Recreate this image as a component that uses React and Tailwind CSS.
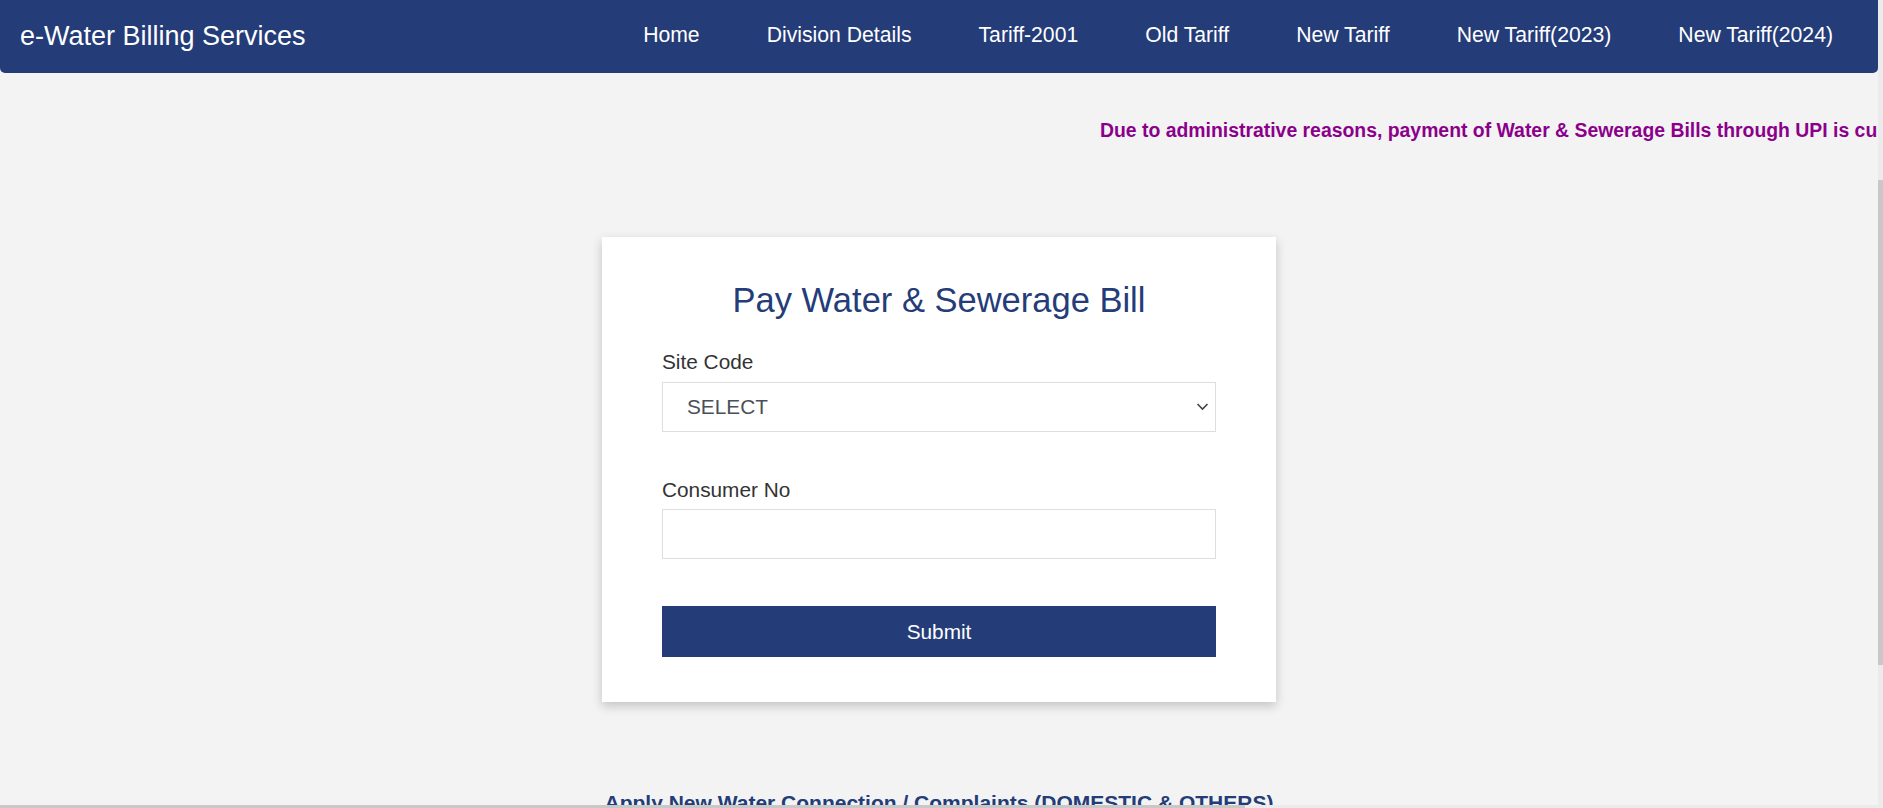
import { useState } from 'react';

const navLinks = [
  'Home',
  'Division Details',
  'Tariff-2001',
  'Old Tariff',
  'New Tariff',
  'New Tariff(2023)',
  'New Tariff(2024)',
];

const Navbar = () => (
  <nav className="h-[73px] shrink-0 bg-[#243c78] rounded-b-[5px] flex items-center justify-between pl-[20px] pr-[45px]">
    <a href="#" className="text-[27px] text-white leading-none">
      e-Water Billing Services
    </a>
    <ul className="flex items-center gap-[67px]">
      {navLinks.map((link) => (
        <li key={link}>
          <a href="#" className="text-[21.2px] text-white leading-none">
            {link}
          </a>
        </li>
      ))}
    </ul>
  </nav>
);

const BillForm = () => {
  const [siteCode, setSiteCode] = useState('');
  const [consumerNo, setConsumerNo] = useState('');

  return (
    <div className="w-[674px] mx-auto bg-white shadow-[0_4px_10px_rgba(0,0,0,0.2)] px-[60px] pt-[43px] pb-[45px]">
      <h2 className="text-[34.5px] leading-[40px] text-[#243c78] text-center">
        Pay Water &amp; Sewerage Bill
      </h2>

      <form onSubmit={(e) => e.preventDefault()}>
        {/* Site code */}
        <label className="block mt-[29px] text-[20.8px] leading-[25px] text-[#333]">
          Site Code
        </label>
        <div className="relative mt-[8px]">
          <select
            value={siteCode}
            onChange={(e) => setSiteCode(e.target.value)}
            className="w-full h-[50px] appearance-none bg-white border border-[#dedede] pl-[24px] pr-8 text-[20.8px] text-[#495057] outline-none"
          >
            <option value="">SELECT</option>
            <option value="01">01</option>
            <option value="02">02</option>
          </select>
          <svg
            className="absolute right-[7px] top-[20px] pointer-events-none"
            width="13"
            height="9"
            viewBox="0 0 13 9"
            fill="none"
          >
            <path d="M1.5 2L6.5 7L11.5 2" stroke="#444" strokeWidth="1.6" />
          </svg>
        </div>

        {/* Consumer number */}
        <label className="block mt-[45px] text-[20.8px] leading-[25px] text-[#333]">
          Consumer No
        </label>
        <input
          type="text"
          value={consumerNo}
          onChange={(e) => setConsumerNo(e.target.value)}
          className="block w-full h-[50px] mt-[7px] border border-[#dedede] px-[24px] text-[20.8px] text-[#495057] outline-none"
        />

        <button
          type="submit"
          className="block w-full h-[51px] mt-[47px] bg-[#243c78] text-white text-[20.8px]"
        >
          Submit
        </button>
      </form>
    </div>
  );
};

export default function App() {
  return (
    <div
      className="h-[808px] w-full flex flex-col overflow-hidden bg-[#f3f3f3]"
      style={{ fontFamily: '"Liberation Sans", Arial, sans-serif' }}
    >
      <div className="flex flex-1 min-h-0">
        {/* Page */}
        <div className="flex-1 min-w-0 overflow-hidden flex flex-col">
          <Navbar />

          {/* Notice marquee */}
          <div className="mt-[45px] h-[24px] shrink-0 overflow-hidden whitespace-nowrap pl-[1100px] text-[19.4px] leading-[24px] font-bold text-[#8b008b]">
            Due to administrative reasons, payment of Water &amp; Sewerage Bills through UPI is currently unavailable.
          </div>

          <div className="mt-[95px] shrink-0">
            <BillForm />
          </div>

          <p className="mt-[88px] text-center text-[21px] leading-[25px] font-bold text-[#243c78] shrink-0">
            Apply New Water Connection / Complaints (DOMESTIC &amp; OTHERS)
          </p>
        </div>

        {/* Vertical scrollbar */}
        <div className="w-[5px] shrink-0 bg-[#ebebeb] flex flex-col">
          <div className="h-[180px] shrink-0" />
          <div className="h-[485px] shrink-0 bg-[#c8c8c8]" />
        </div>
      </div>

      {/* Horizontal scrollbar */}
      <div className="h-[3px] shrink-0 flex">
        <div className="w-[1245px] bg-[#c8c8c8]" />
        <div className="flex-1 bg-[#ebebeb]" />
      </div>
    </div>
  );
}
